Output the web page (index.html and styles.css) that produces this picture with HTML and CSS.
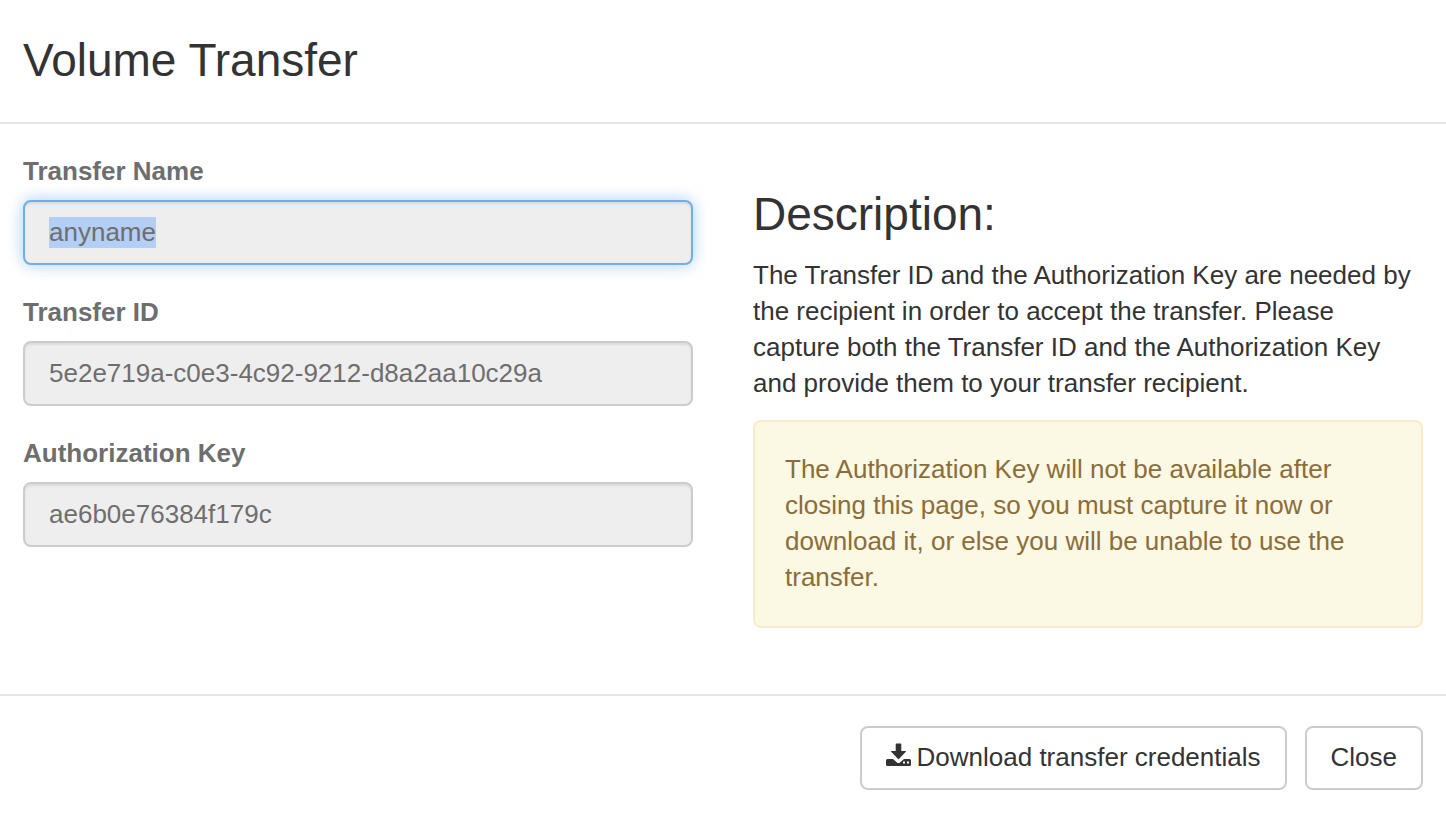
FILE: index.html
```html
<!DOCTYPE html>
<html lang="en">
<head>
<meta charset="utf-8">
<meta name="viewport" content="width=device-width, initial-scale=1">
<title>Volume Transfer</title>
<link rel="stylesheet" href="styles.css">
</head>
<body>
<main class="modal">
  <header class="modal-header">
    <h1 class="title">Volume Transfer</h1>
  </header>
  <div class="modal-body">
    <form class="fields">
      <div class="field">
        <label class="label" for="transfer-name">Transfer Name</label>
        <input class="control" id="transfer-name" type="text" value="anyname" readonly>
      </div>
      <div class="field">
        <label class="label" for="transfer-id">Transfer ID</label>
        <input class="control" id="transfer-id" type="text" value="5e2e719a-c0e3-4c92-9212-d8a2aa10c29a" readonly>
      </div>
      <div class="field">
        <label class="label" for="auth-key">Authorization Key</label>
        <input class="control" id="auth-key" type="text" value="ae6b0e76384f179c" readonly>
      </div>
    </form>
    <section class="description">
      <h2 class="title">Description:</h2>
      <p class="text">The Transfer ID and the Authorization Key are needed by the recipient in order to accept the transfer. Please capture both the Transfer ID and the Authorization Key and provide them to your transfer recipient.</p>
      <p class="alert">The Authorization Key will not be available after closing this page, so you must capture it now or download it, or else you will be unable to use the transfer.</p>
    </section>
  </div>
  <footer class="modal-footer">
    <button class="button" type="button"><svg class="icon" viewBox="0 0 25 24" aria-hidden="true"><path d="M10.300 0.500h4.400q.6 0 .6.6V8h4.200q1 0 .3.800l-6.600 7q-.7.700-1.400 0l-6.600-7Q4.500 8 5.500 8h4.200V1.100q0-.6.6-.6z"/><path d="M1.500 16H7l4 3.500q1.500 1.200 3 0L18 16h5.500Q25 16 25 17.500v4q0 1.500-1.500 1.500h-22Q0 23 0 21.500v-4Q0 16 1.500 16zM17 18.500v2h2v-2zM21 18.500v2h2v-2z" fill-rule="evenodd"/></svg>Download transfer credentials</button>
    <button class="button" type="button">Close</button>
  </footer>
</main>
<script src="app.js"></script>
</body>
</html>
```
FILE: styles.css
```css
* {
  box-sizing: border-box;
}

body {
  margin: 0;
  background: #fff;
  color: #333;
  font: 26px/36px "Liberation Sans", Arial, sans-serif;
}

.modal-header {
  padding: 34px 23px 36px;
  border-bottom: 2px solid #e5e5e5;
}

.title {
  margin: 0;
  font-size: 46px;
  font-weight: 400;
  line-height: 52px;
}

.modal-body {
  display: grid;
  grid-template-columns: 1fr 1fr;
  gap: 60px;
  padding: 29px 23px 66px;
}

.fields {
  display: flex;
  flex-direction: column;
  gap: 29px;
}

.field {
  display: flex;
  flex-direction: column;
  gap: 11px;
}

.label {
  color: #6e6e6e;
  font-weight: 700;
}

.control {
  width: 100%;
  height: 65px;
  padding: 0 24px;
  border: 2px solid #ccc;
  border-radius: 8px;
  background: #eee;
  box-shadow: inset 0 2px 2px rgba(0, 0, 0, 0.075);
  color: #6e6e6e;
  font: inherit;
}

.control:focus {
  border-color: #70aee8;
  outline: 0;
  box-shadow: inset 0 2px 2px rgba(0, 0, 0, 0.075), 0 0 16px rgba(112, 174, 232, 0.6);
}

.control::selection {
  background: #b3cff5;
  color: #6e6e6e;
}

.description {
  padding-top: 35px;
}

.text {
  margin: 17px 0 19px;
}

.alert {
  margin: 0;
  padding: 29px 30px 31px;
  border: 2px solid #faebcc;
  border-radius: 8px;
  background: #fbf8e4;
  color: #8a6d3b;
}

.modal-footer {
  display: flex;
  justify-content: flex-end;
  gap: 18px;
  padding: 30px 23px;
  border-top: 2px solid #e5e5e5;
}

.button {
  display: flex;
  align-items: center;
  gap: 6px;
  height: 64px;
  padding: 0 24px 2px;
  border: 2px solid #ccc;
  border-radius: 8px;
  background: #fff;
  color: #333;
  font: inherit;
}

.icon {
  width: 25px;
  height: 24px;
  margin-bottom: 4px;
  fill: currentColor;
}
```
FILE: app.js
```js
const nameField = document.getElementById("transfer-name");
nameField.focus();
nameField.select();
```
